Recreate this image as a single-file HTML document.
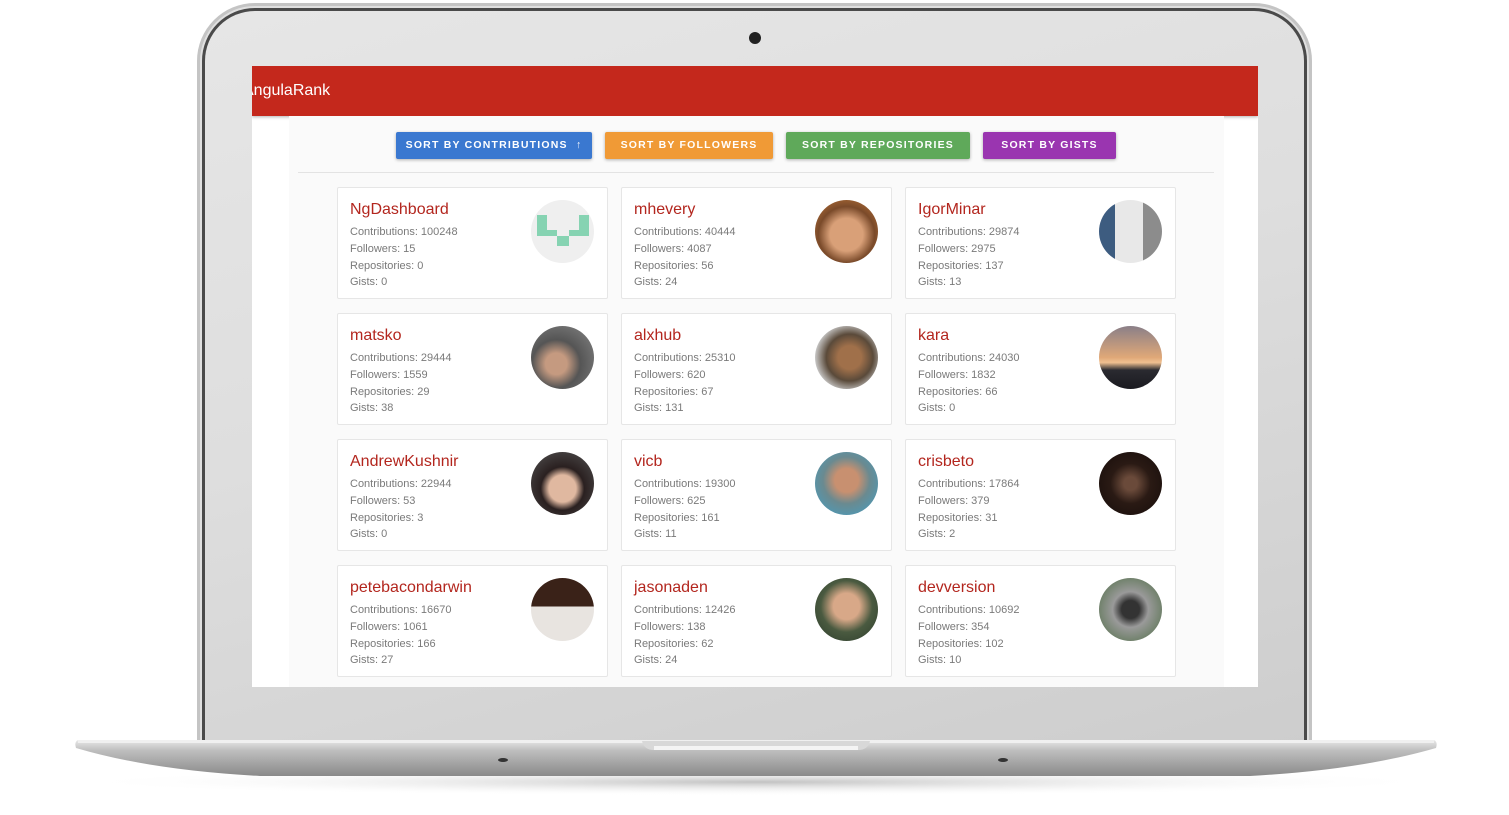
<!DOCTYPE html>
<html><head><meta charset="utf-8"><style>
*{margin:0;padding:0;box-sizing:border-box}
body{width:1509px;height:815px;background:#fff;position:relative;overflow:hidden;font-family:"Liberation Sans",Roboto,sans-serif}
.lid{position:absolute;left:197px;top:3px;width:1115px;height:745px;border-radius:58px 58px 0 0;background:#c4c4c4;}
.lid2{position:absolute;left:200px;top:6px;width:1109px;height:742px;border-radius:55px 55px 0 0;background:#e0e0e0;}
.lid2b{position:absolute;left:202px;top:8px;width:1105px;height:740px;border-radius:53px 53px 0 0;background:#4a4a4a;}
.lid3{position:absolute;left:205px;top:11px;width:1099px;height:737px;border-radius:50px 50px 0 0;background:linear-gradient(165deg,#e6e6e6 0%,#dedede 45%,#cdcdcd 100%);}
.cam{position:absolute;left:749px;top:32px;width:12px;height:12px;border-radius:50%;background:#222;}
.screen{position:absolute;left:252px;top:66px;width:1006px;height:621px;background:#fff;overflow:hidden}
.hdr{position:absolute;left:0;top:0;width:1006px;height:50px;background:#c4281c;box-shadow:0 1px 3px rgba(0,0,0,.3)}
.hdr span{position:absolute;left:-9px;top:16px;color:#fff;font-size:16px}
.cont{position:absolute;left:37px;top:50px;width:935px;height:571px;background:#fafafa}
.btn{position:absolute;top:16px;height:27px;color:#fff;font-size:10.5px;letter-spacing:1.2px;font-weight:bold;text-align:center;line-height:27px;border-radius:2px;box-shadow:0 1px 3px rgba(0,0,0,.3)}
.div{position:absolute;left:9px;top:56px;width:916px;height:1px;background:#e3e3e3}
.card{position:absolute;width:271px;height:112px;background:#fff;border:1px solid #e6e6e6;border-radius:2px}
.card h3{position:absolute;left:12px;top:13px;font-size:16px;font-weight:normal;color:#b3261e}
.card p{position:absolute;left:12px;font-size:11px;color:#7a7a7a}
.av{position:absolute;left:193px;top:12px;width:63px;height:63px;border-radius:50%}
</style></head><body>
<svg style="position:absolute;left:0;top:0" width="1509" height="815">
<defs><linearGradient id="bg" x1="0" y1="0" x2="0" y2="1"><stop offset="0" stop-color="#e8e8e8"/><stop offset="0.3" stop-color="#bdbdbd"/><stop offset="1" stop-color="#8a8a8a"/></linearGradient>
<radialGradient id="sh" cx="0.5" cy="0.5" r="0.5"><stop offset="0" stop-color="#999" stop-opacity=".6"/><stop offset="1" stop-color="#fff" stop-opacity="0"/></radialGradient></defs>
<ellipse cx="756" cy="782" rx="690" ry="14" fill="url(#sh)"/>
</svg>
<div class="lid"></div><div class="lid2"></div><div class="lid2b"></div><div class="lid3"></div>
<div class="cam"></div>
<svg style="position:absolute;left:0;top:0" width="1509" height="815">
<path d="M78 740 L1434 740 Q1438 742 1436 748 Q1360 770 1250 776 L260 776 Q150 770 76 748 Q74 742 78 740Z" fill="url(#bg)"/>
<rect x="78" y="740" width="1356" height="3" fill="#f0f0f0"/>
<path d="M642 741 L870 741 Q868 750 858 750 L654 750 Q644 750 642 741Z" fill="#d8d8d8"/>
<rect x="654" y="746" width="204" height="4" fill="#f4f4f4"/>
<ellipse cx="503" cy="760" rx="5" ry="2" fill="#333"/>
<ellipse cx="1003" cy="760" rx="5" ry="2" fill="#333"/>
</svg>
<div class="screen">
<div class="hdr"><span>AngulaRank</span></div>
<div class="cont">
<div class="btn" style="left:107px;width:196px;background:#3a78d0">SORT BY CONTRIBUTIONS &nbsp;↑</div>
<div class="btn" style="left:316px;width:168px;background:#f09a36">SORT BY FOLLOWERS</div>
<div class="btn" style="left:497px;width:184px;background:#5fa95a">SORT BY REPOSITORIES</div>
<div class="btn" style="left:694px;width:133px;background:#9a35b0">SORT BY GISTS</div>
<div class="div"></div>
</div>
</div>
<div style="position:absolute;left:0;top:0">
<div class="card" style="left:337px;top:187px"><h3>NgDashboard</h3><p style="top:38px">Contributions: 100248</p><p style="top:55px">Followers: 15</p><p style="top:72px">Repositories: 0</p><p style="top:88px">Gists: 0</p><div class="av" style="background:#efefef"><svg width="63" height="63"><path d="M5 15h10v15h10v6h12v-6h10v-15h10v21h-20v10h-12v-10h-20z" fill="#86d3b2" transform="translate(1,0)"/></svg></div></div>
<div class="card" style="left:621px;top:187px"><h3>mhevery</h3><p style="top:38px">Contributions: 40444</p><p style="top:55px">Followers: 4087</p><p style="top:72px">Repositories: 56</p><p style="top:88px">Gists: 24</p><div class="av" style="background:radial-gradient(circle at 50% 55%,#d9a078 0 35%,#7a4a2a 60%,#c77b3a 100%)"></div></div>
<div class="card" style="left:905px;top:187px"><h3>IgorMinar</h3><p style="top:38px">Contributions: 29874</p><p style="top:55px">Followers: 2975</p><p style="top:72px">Repositories: 137</p><p style="top:88px">Gists: 13</p><div class="av" style="background:linear-gradient(90deg,#3d5c80 0 25%,#e8e8e8 25% 70%,#8c8c8c 70%)"></div></div>
<div class="card" style="left:337px;top:313px"><h3>matsko</h3><p style="top:38px">Contributions: 29444</p><p style="top:55px">Followers: 1559</p><p style="top:72px">Repositories: 29</p><p style="top:88px">Gists: 38</p><div class="av" style="background:radial-gradient(circle at 40% 60%,#c59a80 0 20%,#555 45%,#888 100%)"></div></div>
<div class="card" style="left:621px;top:313px"><h3>alxhub</h3><p style="top:38px">Contributions: 25310</p><p style="top:55px">Followers: 620</p><p style="top:72px">Repositories: 67</p><p style="top:88px">Gists: 131</p><div class="av" style="background:radial-gradient(circle at 55% 50%,#a0704a 0 25%,#5a4a3a 50%,#ccc 75%)"></div></div>
<div class="card" style="left:905px;top:313px"><h3>kara</h3><p style="top:38px">Contributions: 24030</p><p style="top:55px">Followers: 1832</p><p style="top:72px">Repositories: 66</p><p style="top:88px">Gists: 0</p><div class="av" style="background:linear-gradient(180deg,#8a7f88 0%,#e0a878 50%,#f0c090 58%,#2a2a30 70%,#1a1a20 100%)"></div></div>
<div class="card" style="left:337px;top:439px"><h3>AndrewKushnir</h3><p style="top:38px">Contributions: 22944</p><p style="top:55px">Followers: 53</p><p style="top:72px">Repositories: 3</p><p style="top:88px">Gists: 0</p><div class="av" style="background:radial-gradient(circle at 50% 58%,#e0b8a0 0 28%,#2a2020 45%,#555 100%)"></div></div>
<div class="card" style="left:621px;top:439px"><h3>vicb</h3><p style="top:38px">Contributions: 19300</p><p style="top:55px">Followers: 625</p><p style="top:72px">Repositories: 161</p><p style="top:88px">Gists: 11</p><div class="av" style="background:radial-gradient(circle at 50% 45%,#c89070 0 25%,#6a8a90 50%,#40a0c8 100%)"></div></div>
<div class="card" style="left:905px;top:439px"><h3>crisbeto</h3><p style="top:38px">Contributions: 17864</p><p style="top:55px">Followers: 379</p><p style="top:72px">Repositories: 31</p><p style="top:88px">Gists: 2</p><div class="av" style="background:radial-gradient(circle at 50% 50%,#6a4a3a 0 15%,#2a1a14 45%,#150c0a 100%)"></div></div>
<div class="card" style="left:337px;top:565px"><h3>petebacondarwin</h3><p style="top:38px">Contributions: 16670</p><p style="top:55px">Followers: 1061</p><p style="top:72px">Repositories: 166</p><p style="top:88px">Gists: 27</p><div class="av" style="background:linear-gradient(180deg,#3a2218 0 45%,#e8e4e0 45%)"></div></div>
<div class="card" style="left:621px;top:565px"><h3>jasonaden</h3><p style="top:38px">Contributions: 12426</p><p style="top:55px">Followers: 138</p><p style="top:72px">Repositories: 62</p><p style="top:88px">Gists: 24</p><div class="av" style="background:radial-gradient(circle at 50% 45%,#d8a888 0 28%,#4a5a40 55%,#2a3a2a 100%)"></div></div>
<div class="card" style="left:905px;top:565px"><h3>devversion</h3><p style="top:38px">Contributions: 10692</p><p style="top:55px">Followers: 354</p><p style="top:72px">Repositories: 102</p><p style="top:88px">Gists: 10</p><div class="av" style="background:radial-gradient(circle at 50% 50%,#333 0 20%,#9a9a9a 40%,#4a6a40 100%)"></div></div>
</div>
</body></html>
